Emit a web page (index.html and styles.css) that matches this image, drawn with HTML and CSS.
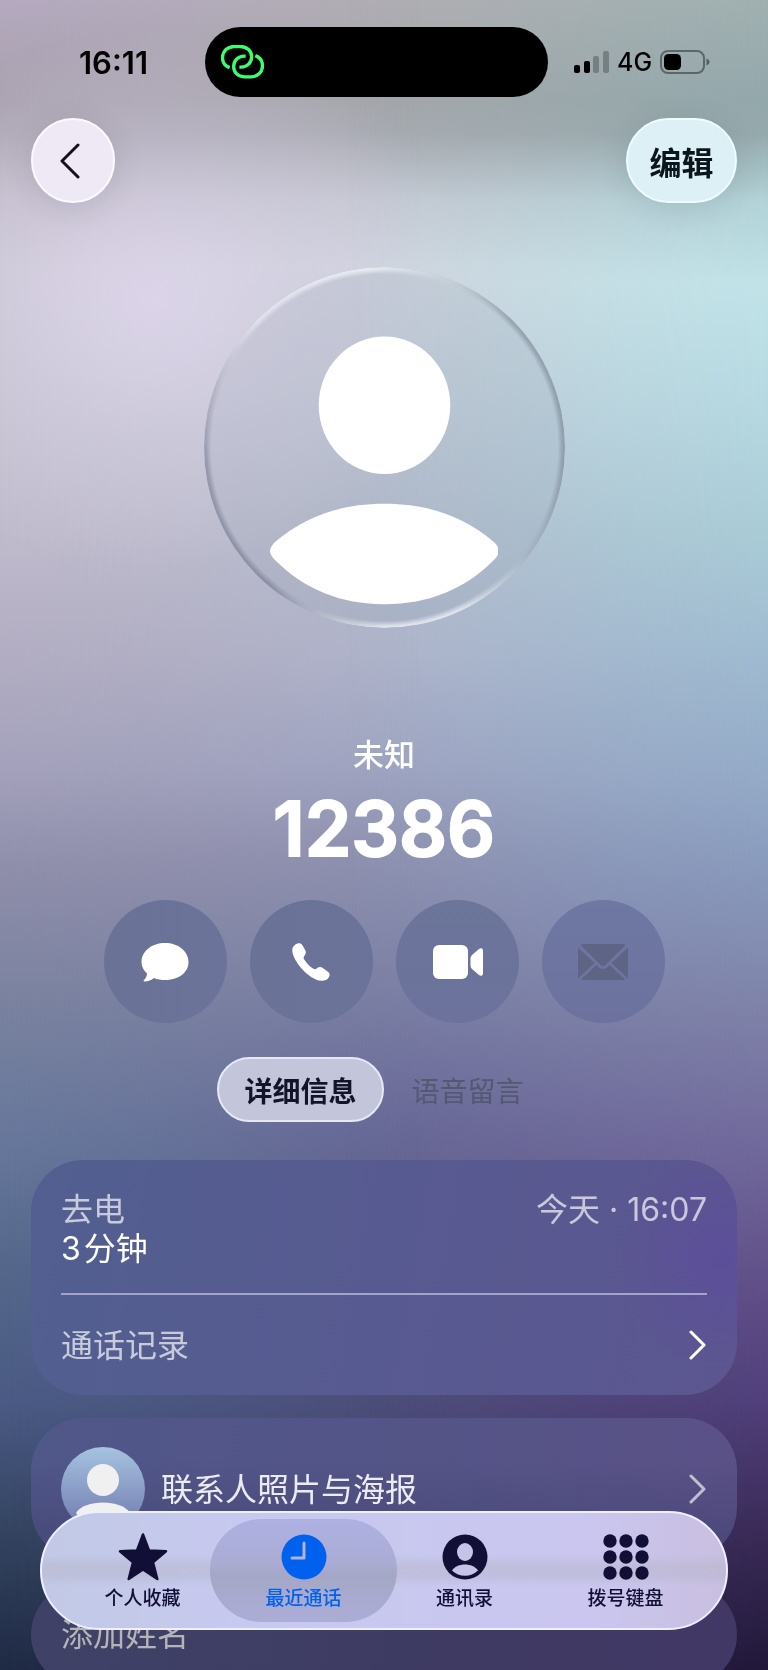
FILE: index.html
```
<!DOCTYPE html>
<html lang="zh-CN">
<head>
    <meta charset="UTF-8">
    <meta name="viewport" content="width=device-width, initial-scale=1.0">
    <title>12386</title>

    <link rel="stylesheet" href="styles.css">
</head>
<body>
    <div class="backdrop">
        <div class="glow"></div>
    </div>

    <div class="status-bar">
        <span class="time">16:11</span>
        <div class="island">
            <svg class="link-icon" viewBox="0 0 129 100">
                <path d="M26 68C13 63 4.5 52 4.5 38 4.5 18 20 4.5 40 4.5H58C78 4.5 92 18 92 35 92 53 78 66 60 66.5H55"/>
                <path d="M103 32C116 37 124.5 48 124.5 62 124.5 82 109 95.5 89 95.5H71C51 95.5 38 82 38 65 38 47 51 33.5 69 33.5H74"/>
            </svg>
        </div>
        <div class="indicators">
            <svg class="signal" viewBox="0 0 35 22">
                <rect x="0" y="14" width="6" height="8" rx="2"/>
                <rect x="10" y="10" width="6" height="12" rx="2"/>
                <rect x="19" y="5" width="6" height="17" rx="2" opacity=".25"/>
                <rect x="29" y="0" width="6" height="22" rx="2" opacity=".25"/>
            </svg>
            <span class="network">4G</span>
            <svg class="battery" viewBox="0 0 50 24">
                <rect x="1" y="1" width="43" height="22" rx="7" fill="none" stroke="#000" stroke-opacity=".4" stroke-width="2"/>
                <rect x="4" y="4" width="17" height="16" rx="4.5"/>
                <path d="M46.5 8.5C50.5 10 50.5 14 46.5 15.5Z" opacity=".45"/>
            </svg>
        </div>
    </div>

    <header class="toolbar">
        <a class="glass back" href="#" aria-label="返回">
            <svg viewBox="0 0 22 36"><path d="M19 2 3 18 19 34"/></svg>
        </a>
        <button class="glass edit">编辑</button>
    </header>

    <main>
        <div class="avatar">
            <svg viewBox="0 0 228 268">
                <ellipse cx="114" cy="69" rx="65.5" ry="68.5"/>
                <path d="M5 205C34 181 68 167 114 167S194 181 223 205Q228 210 228 214T223 223C194 252 158 267 114 267S34 252 5 223Q0 218 0 214T5 205Z"/>
            </svg>
        </div>
        <p class="caption">未知</p>
        <h1 class="number">12386</h1>

        <div class="actions">
            <button class="action" aria-label="信息">
                <svg width="48" height="40" viewBox="0 0 48 40">
                    <path d="M24 1C37 1 47.5 9 47.5 20S37 38 24 38C20 38 16 37.5 13 36 10.5 38 7 39.5 3.5 39.5 2.3 39.5 2.3 38.5 3 38 5 36 6 33.5 6 31.5 2.5 28.5 .5 24.5 .5 20 .5 9 11 1 24 1Z"/>
                </svg>
            </button>
            <button class="action" aria-label="呼叫">
                <svg width="38" height="38" viewBox="0 0 38 38">
                    <path d="M7.5 .3C9 .3 10 1.5 11 3.2L13.4 7.5C14.3 9.3 13.8 11 12.6 12.6 11.5 14.3 11.3 15 12.2 16.5 14.5 20 17.5 23.2 21 25.6 22.6 26.6 23.4 26.4 25 25.2 26.8 24 28.5 23.5 30.4 24.7L35 28C37.5 29.8 38.3 31.5 37 34 35.5 36.8 32.5 38 29 37.8 23 37.3 16 32.5 10.5 26.5 5 20.5 .3 13 .3 7.3 .3 3 4 .3 7.5 .3Z"/>
                </svg>
            </button>
            <button class="action" aria-label="视频">
                <svg width="51" height="34" viewBox="0 0 51 34">
                    <rect x="1" width="35" height="34" rx="6"/>
                    <path d="M38.5 13.5Q38.5 11.5 40 10L47 4Q48.5 2.8 50 3.5 51 4 51 5.5V28.5Q51 30 50 30.5 48.5 31.2 47 30L40 24Q38.5 22.5 38.5 20.5Z"/>
                </svg>
            </button>
            <button class="action mail" aria-label="邮件" disabled>
                <svg width="50" height="36" viewBox="0 0 50 36">
                    <path d="M2.5 1Q4 0 6 0H44Q46 0 47.5 1L28 20.5Q25 23.5 22 20.5ZM0 3.5 16.5 19 0 34.5ZM50 3.5V34.5L33.5 19ZM18.5 21 20.5 23Q25 27 29.5 23L31.5 21 47 35.5Q46 36 44 36H6Q4 36 3 35.5Z"/>
                </svg>
            </button>
        </div>

        <div class="segments">
            <button class="segment selected">详细信息</button>
            <button class="segment" disabled>语音留言</button>
        </div>

        <section class="card calls">
            <div class="call">
                <div>
                    <p class="muted">去电</p>
                    <p class="duration"><span>3</span><span>分钟</span></p>
                </div>
                <p class="muted">今天 · 16:07</p>
            </div>
            <a class="row history" href="#">
                <span class="muted">通话记录</span>
                <svg class="chevron" viewBox="0 0 18 30"><path d="M2 2 15 15 2 28"/></svg>
            </a>
        </section>

        <section class="card poster">
            <a class="row" href="#">
                <span class="thumb">
                    <svg viewBox="0 0 84 84">
                        <circle cx="42" cy="33" r="16"/>
                        <path d="M15 66C23 52 61 52 69 66 61 80 23 80 15 66Z"/>
                    </svg>
                </span>
                <span class="poster-title">联系人照片与海报</span>
                <svg class="chevron dim" viewBox="0 0 18 30"><path d="M2 2 15 15 2 28"/></svg>
            </a>
        </section>

        <section class="card add-name">
            <a class="row" href="#">添加姓名</a>
        </section>
    </main>

    <nav class="tab-bar">
        <a class="tab" href="#">
            <svg viewBox="0 0 50 48">
                <path d="M25 1.5 31 17.5 48 18.3 35 29.2 39.3 46 25 36.5 10.7 46 15 29.2 2 18.3 19 17.5Z" stroke="currentColor" stroke-width="2.5" stroke-linejoin="round"/>
            </svg>
            个人收藏
        </a>
        <a class="tab current" href="#" aria-current="page">
            <svg viewBox="0 0 50 48">
                <circle cx="25" cy="24" r="22.5"/>
                <path d="M25 10V25H13" fill="none" stroke="#b3b2dc" stroke-width="3" stroke-linecap="round" stroke-linejoin="round"/>
            </svg>
            最近通话
        </a>
        <a class="tab" href="#">
            <svg viewBox="0 0 50 48">
                <circle cx="25" cy="24" r="22.5"/>
                <ellipse cx="25" cy="19" rx="8" ry="9" fill="#c6c4e6"/>
                <path d="M12 37.5C17 29.5 33 29.5 38 37.5 31 44.5 19 44.5 12 37.5Z" fill="#c6c4e6"/>
            </svg>
            通讯录
        </a>
        <a class="tab" href="#">
            <svg viewBox="0 0 50 48">
                <circle cx="9" cy="8" r="6.7"/><circle cx="25" cy="8" r="6.7"/><circle cx="41" cy="8" r="6.7"/>
                <circle cx="9" cy="24" r="6.7"/><circle cx="25" cy="24" r="6.7"/><circle cx="41" cy="24" r="6.7"/>
                <circle cx="9" cy="40" r="6.7"/><circle cx="25" cy="40" r="6.7"/><circle cx="41" cy="40" r="6.7"/>
            </svg>
            拨号键盘
        </a>
    </nav>
</body>
</html>
```
FILE: styles.css
```
* {
    box-sizing: border-box;
}

body {
    margin: 0;
    height: 100vh;
    overflow: hidden;
    background-color: #2c2c50;
    color: #fff;
    font-family: Inter, "Noto Sans CJK SC", sans-serif;
    font-size: 32px;
    line-height: 39px;
}

p, h1 {
    margin: 0;
}

a {
    color: inherit;
    text-decoration: none;
}

button {
    font-family: inherit;
    border: none;
    padding: 0;
    cursor: pointer;
}

svg {
    display: block;
    fill: currentColor;
}

/* background: middle colours, with left and right sides faded over them */
.backdrop {
    position: fixed;
    inset: 0;
    z-index: -1;
    background: linear-gradient(#b1aeb3, #a5a7ab 6%, #a8abb1 8%, #c5c8d1 12%, #d0d5de 16%, #c3cad7 24%, #b5bcce 32%, #afb4ca 39%, #9fa4c1 46%, #9092b1 51%, #7c80a5 59%, #696a98 67%, #5a5b88 75%, #4c4e79 84%, #413f68 91%, #2b2a4c);
}

.backdrop::before,
.backdrop::after,
.glow {
    content: "";
    position: absolute;
    inset: 0;
}

.backdrop::before {
    background: linear-gradient(#b4a9bf, #a8a0ad 6%, #aaa3b0 8%, #c0bac6 12%, #cac6d1 16%, #c5c2cf 24%, #bfbacb 32%, #b2adc2 39%, #a3a1bb 46%, #8f8eaa 52%, #7a829f 60%, #65769a 69%, #54678a 76%, #4a5a84 84%, #33435f 92%, #1f2a44);
    mask-image: linear-gradient(to right, #000, rgba(0, 0, 0, 0.75) 20%, rgba(0, 0, 0, 0.2) 42%, transparent 55%);
}

.backdrop::after {
    background: linear-gradient(#a0b0b1, #93a8ab 6%, #95a9ac 8%, #b1d2d7 12%, #c0e3e8 17%, #b6d9e1 24%, #a9cbd6 32%, #9fbbd0 39%, #93a9c6 47%, #8797ba 53%, #7f83a9 60%, #70689b 69%, #5e4c86 78%, #503f7a 84%, #392a56 92%, #21183a);
    mask-image: linear-gradient(to left, #000, rgba(0, 0, 0, 0.75) 18%, rgba(0, 0, 0, 0.25) 40%, transparent 55%);
}

.glow {
    background: radial-gradient(ellipse 42% 16% at 20% 18%, rgba(224, 215, 238, 0.8), rgba(216, 210, 232, 0.4) 50%, transparent);
}

.status-bar {
    display: grid;
    grid-template-columns: 205fr 343fr 220fr;
    align-items: center;
    padding-top: 27px;
    color: #000;
}

.time {
    padding-left: 79px;
    font-size: 31px;
    font-weight: 600;
}

.island {
    display: flex;
    align-items: center;
    height: 70px;
    padding-left: 16px;
    border-radius: 35px;
    background-color: #000;
}

.link-icon {
    width: 43px;
    fill: none;
    stroke: #3cff6e;
    stroke-width: 10;
}

.indicators {
    display: flex;
    align-items: center;
    gap: 8px;
    padding-left: 26px;
}

.signal {
    width: 35px;
}

.network {
    font-size: 25px;
    font-weight: 500;
}

.battery {
    width: 50px;
}

.toolbar {
    display: flex;
    justify-content: space-between;
    margin-top: 21px;
    padding: 0 31px;
}

.glass {
    display: flex;
    align-items: center;
    justify-content: center;
    height: 85px;
    border: 2px solid #fbf9ff;
    border-radius: 43px;
    box-shadow: 0 4px 30px rgba(40, 50, 60, 0.12);
}

.back {
    width: 84px;
    padding-right: 6px;
    background-color: #efe9f6;
}

.back svg {
    width: 22px;
    fill: none;
    stroke: #14101c;
    stroke-width: 3;
    stroke-linecap: round;
    stroke-linejoin: round;
}

.edit {
    width: 111px;
    border-color: #eefcff;
    background-color: #dcf0f6;
    color: #0b161c;
    font-size: 32px;
    font-weight: 600;
}

main {
    padding: 0 31px;
}

.avatar {
    position: relative;
    width: 361px;
    height: 361px;
    margin: 64px auto 0;
    padding: 69px 66px;
    border-radius: 50%;
    background-color: rgba(150, 160, 180, 0.18);
}

/* glass edge, lit from the top left and the bottom right */
.avatar::before {
    content: "";
    position: absolute;
    inset: 0;
    border-radius: 50%;
    background: conic-gradient(from -45deg, #dfe2ea, #e6ebf0 40deg, #c2cad2 70deg, #98a4b2 90deg, #8f9dad 140deg, #a4b1c1 170deg, #dde3ec 200deg, #dfe3ea 225deg, #b0b5c6 248deg, #8b90a6 265deg, #9698ac 310deg, #b6b7c6 335deg, #dfe2ea);
    mask-image: radial-gradient(closest-side, transparent 96%, #000 99%);
}

.caption {
    margin-top: 107px;
    font-size: 31px;
    font-weight: 500;
    line-height: 40px;
    text-align: center;
}

.number {
    margin-top: 9px;
    margin-bottom: 26px;
    font-size: 75px;
    font-weight: 600;
    line-height: 90px;
    text-align: center;
    -webkit-text-stroke: 2px #fff;
    stroke-linejoin: round;
}

.actions {
    display: flex;
    justify-content: center;
    gap: 23px;
}

.action {
    display: flex;
    align-items: center;
    justify-content: center;
    width: 123px;
    height: 123px;
    border-radius: 50%;
    background: linear-gradient(to right, #6a7296, #6b739a);
    color: #fff;
}

.action:nth-child(3) {
    background: linear-gradient(#6c759a, #6c729c);
}

.action.mail {
    background: linear-gradient(#6e78a3, #6c729d);
    color: #5d6484;
}

.segments {
    display: flex;
    justify-content: center;
    margin-top: 34px;
}

.segment {
    width: 167px;
    height: 65px;
    border: 2px solid transparent;
    border-radius: 33px;
    background: none;
    color: #545871;
    font-size: 28px;
}

.segment.selected {
    border-color: #e6e8f6;
    background-color: #c3c6da;
    color: #12152a;
    font-weight: 600;
}

.card {
    padding: 0 30px;
    border-radius: 52px;
}

.calls {
    margin-top: 38px;
    background: radial-gradient(circle at 98% 42%, rgba(92, 78, 155, 0.9), transparent 16%), linear-gradient(100deg, #525f90, #575a90 50%, #5c5690);
}

.muted {
    color: rgba(255, 255, 255, 0.68);
}

.call {
    display: flex;
    justify-content: space-between;
    padding: 30px 0 25px;
    border-bottom: 2px solid #a3a5c4;
}

.duration {
    display: flex;
    gap: 3px;
}

.row {
    display: flex;
    align-items: center;
}

.history {
    height: 100px;
}

.chevron {
    width: 18px;
    margin-left: auto;
    fill: none;
    stroke: #fff;
    stroke-width: 3;
    stroke-linecap: round;
    stroke-linejoin: round;
}

.chevron.dim {
    stroke: #bfbfd4;
}

.poster {
    margin-top: 23px;
    background: linear-gradient(to bottom, transparent 30%, rgba(62, 62, 108, 0.6)), linear-gradient(to right, #505789, #545487 55%, #5a5187);
}

.poster .row {
    height: 142px;
    gap: 16px;
}

.thumb {
    width: 84px;
    height: 84px;
    border-radius: 50%;
    background: linear-gradient(#a6c3e0, #6f78ae);
    color: #f0f0f0;
}

.poster-title {
    color: #ecebf2;
}

.add-name {
    margin-top: 23px;
    background: linear-gradient(to right, #3f4266, #3e3a62 60%, #423866);
    color: #b4b4b8;
}

.add-name .row {
    height: 103px;
}

.tab-bar {
    position: fixed;
    right: 40px;
    bottom: 40px;
    left: 40px;
    display: grid;
    grid-template-columns: repeat(4, 1fr);
    height: 119px;
    padding: 0 20px;
    border: 2px solid #eeefff;
    border-radius: 60px;
    background:
        linear-gradient(transparent 36%, rgba(180, 180, 200, 0.45) 46%, rgba(180, 180, 200, 0.45) 54%, transparent 64%),
        linear-gradient(to right, #c2c9e6, #c7c9ef 30%, #cac6ef 80%, #c9bfe0);
}

.tab {
    position: relative;
    display: flex;
    flex-direction: column;
    align-items: center;
    padding-top: 20px;
    color: #110f36;
    font-size: 19px;
    font-weight: 500;
    line-height: 28px;
}

.tab svg {
    position: relative;
    width: 50px;
    margin-bottom: 4px;
}

.tab.current {
    z-index: 0;
    color: #0061ef;
}

/* highlight reaches past the tab on both sides */
.tab.current::before {
    content: "";
    position: absolute;
    inset: 6px -13px;
    z-index: -1;
    border-radius: 52px;
    background: linear-gradient(#aeb0e2, #aaacd4 42%, #a5a7c6 55%, #abadd8);
}
```
